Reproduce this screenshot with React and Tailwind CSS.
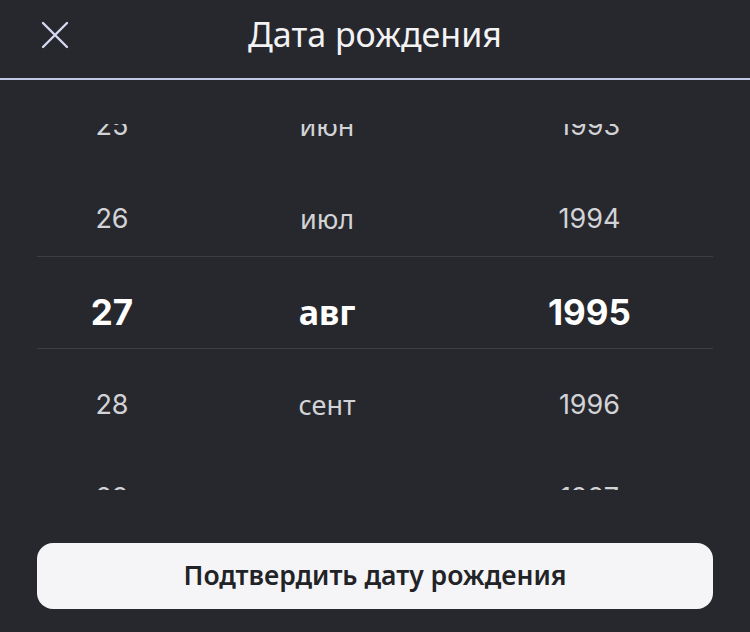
import React from 'react';

const rows = [
  { day: '25', month: 'июн', year: '1993' },
  { day: '26', month: 'июл', year: '1994' },
  { day: '27', month: 'авг', year: '1995', active: true },
  { day: '28', month: 'сент', year: '1996' },
  { day: '29', month: 'окт', year: '1997' },
];

function CloseIcon() {
  return (
    <svg width="28" height="28" viewBox="0 0 28 28" fill="none">
      <path d="M2 2L26 26M26 2L2 26" stroke="#d6daf0" strokeWidth="2.4" strokeLinecap="round" />
    </svg>
  );
}

function PickerRow({ day, month, year, active }) {
  return (
    <div
      className={
        'grid grid-cols-[150px_280px_245px] h-[93px] pt-[19px] items-center text-center ' +
        (active
          ? 'border-y border-[#3d3e44] text-white font-bold text-[35px]'
          : 'text-[#d2d3d7] font-normal text-[27px]')
      }
    >
      <span>{day}</span>
      <span className={"font-['Noto_Sans',sans-serif] " + (active ? 'text-[34px]' : 'text-[27px]')}>
        {month}
      </span>
      <span>{year}</span>
    </div>
  );
}

export default function App() {
  return (
    <div className="w-[750px] h-[632px] bg-[#27282d] flex flex-col font-['Noto_Sans',sans-serif] overflow-hidden">
      {/* Header */}
      <div className="relative h-[80px] shrink-0 border-b-2 border-[#bfc9e6] flex items-center justify-center pb-[10px]">
        <button className="absolute left-[41px] top-[21px]">
          <CloseIcon />
        </button>
        <h1 className="text-[34px] text-[#f3f3f5] font-normal leading-none">Дата рождения</h1>
      </div>

      {/* Wheel */}
      <div className="mt-[44px] h-[366px] overflow-hidden mx-[37px] shrink-0">
        <div className="-mt-[54px] font-['Inter',sans-serif]">
          {rows.map((r) => (
            <PickerRow key={r.day} {...r} />
          ))}
        </div>
      </div>

      {/* Confirm */}
      <div className="px-[37px] mt-[53px]">
        <button className="w-full h-[66px] rounded-[16px] bg-[#f5f5f7] text-[#222327] text-[26.5px] font-semibold flex items-center justify-center">
          Подтвердить дату рождения
        </button>
      </div>
    </div>
  );
}
